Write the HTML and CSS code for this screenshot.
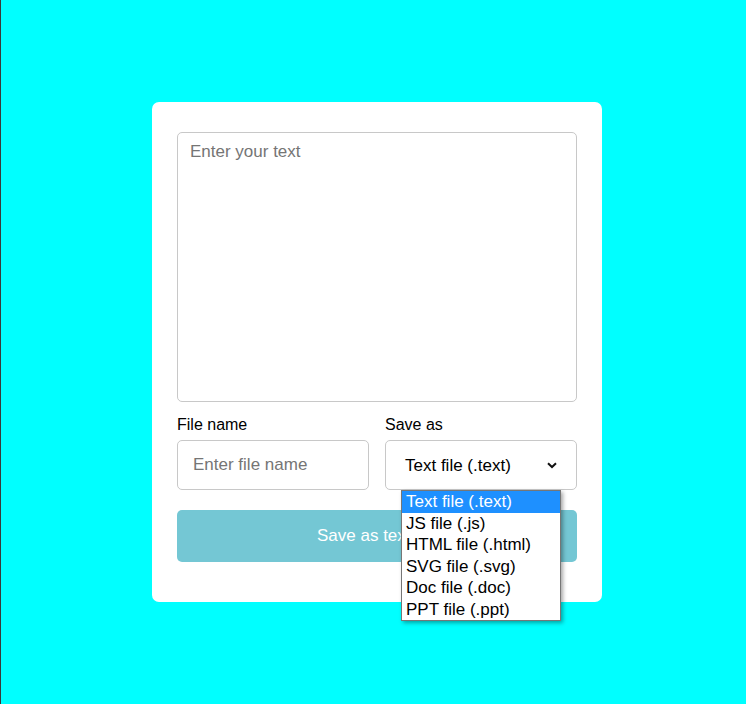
FILE: index.html
```html
<!DOCTYPE html>
<html>
<head>
<meta charset="utf-8">
<link rel="stylesheet" href="styles.css">
</head>
<body>
<div class="page">
  <div class="card">
    <textarea class="text-area" placeholder="Enter your text"></textarea>
    <div class="fields">
      <div class="field">
        <label class="label">File name</label>
        <input class="input" type="text" placeholder="Enter file name">
      </div>
      <div class="field">
        <label class="label">Save as</label>
        <div class="select-wrap">
          <div class="select">
            <span>Text file (.text)</span>
            <svg class="chev" width="10" height="7" viewBox="0 0 10 7"><path d="M1 1.2 L5 5 L9 1.2" fill="none" stroke="#111" stroke-width="2"/></svg>
          </div>
          <ul class="dropdown">
            <li class="opt active">Text file (.text)</li>
            <li class="opt">JS file (.js)</li>
            <li class="opt">HTML file (.html)</li>
            <li class="opt">SVG file (.svg)</li>
            <li class="opt">Doc file (.doc)</li>
            <li class="opt">PPT file (.ppt)</li>
          </ul>
        </div>
      </div>
    </div>
    <button class="btn">Save as text file</button>
  </div>
</div>
</body>
</html>
```
FILE: styles.css
```css
html, body {
  margin: 0;
  padding: 0;
}
body {
  background: #00ffff;
  font-family: "Liberation Sans", Arial, sans-serif;
  border-left: 1px solid #3a3a3a;
  box-sizing: border-box;
  height: 704px;
  overflow: hidden;
}
.page {
  height: 704px;
  display: flex;
  align-items: center;
  justify-content: center;
  padding-left: 7px;
}
.card {
  width: 450px;
  height: 500px;
  box-sizing: border-box;
  background: #fff;
  border-radius: 7px;
  padding: 30px 25px 40px;
  display: flex;
  flex-direction: column;
}
.text-area {
  display: block;
  width: 400px;
  height: 270px;
  box-sizing: border-box;
  border: 1px solid #c8c8c8;
  border-radius: 5px;
  padding: 9px 12px;
  font-family: "Liberation Sans", Arial, sans-serif;
  font-size: 17px;
  resize: none;
  margin: 0;
  outline: none;
}
.text-area::placeholder, .input::placeholder {
  color: #757575;
}
.fields {
  display: flex;
  gap: 16px;
  margin-top: 14px;
}
.field {
  flex: 1;
  display: flex;
  flex-direction: column;
}
.label {
  font-size: 16px;
  line-height: 18px;
  color: #000;
  margin-bottom: 6px;
}
.input {
  height: 50px;
  box-sizing: border-box;
  border: 1px solid #c8c8c8;
  border-radius: 5px;
  padding: 0 15px;
  font-family: "Liberation Sans", Arial, sans-serif;
  font-size: 17px;
  width: 100%;
  margin: 0;
  outline: none;
}
.select-wrap {
  position: relative;
}
.select {
  height: 50px;
  box-sizing: border-box;
  border: 1px solid #c8c8c8;
  border-radius: 5px;
  padding: 2px 19px 0 19px;
  display: flex;
  align-items: center;
  justify-content: space-between;
  font-size: 17px;
  color: #000;
}
.chev {
  display: block;
  margin-top: -1px;
}
.dropdown {
  position: absolute;
  left: 16px;
  top: 50px;
  width: 160px;
  box-sizing: border-box;
  margin: 0;
  padding: 0;
  list-style: none;
  background: #fff;
  border: 1px solid #767676;
  box-shadow: 2px 2px 4px rgba(0,0,0,0.35);
  z-index: 10;
}
.opt {
  height: 21.5px;
  line-height: 21px;
  padding-left: 4px;
  font-size: 17px;
  color: #000;
  white-space: nowrap;
}
.opt.active {
  background: #1e90ff;
  color: #fff;
}
.btn {
  margin-top: 20px;
  height: 52px;
  width: 100%;
  border: none;
  border-radius: 5px;
  background: #74c7d4;
  color: #fff;
  font-family: "Liberation Sans", Arial, sans-serif;
  font-size: 17px;
  padding: 0;
}
```
